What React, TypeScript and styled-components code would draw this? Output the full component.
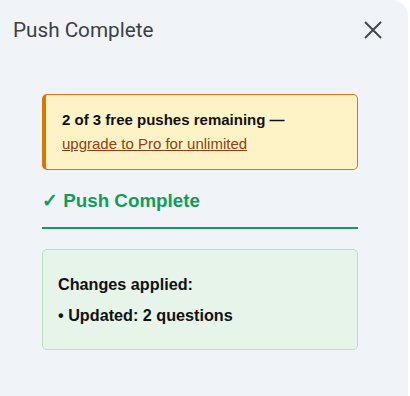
import styled, { createGlobalStyle } from "styled-components"

const GlobalStyle = createGlobalStyle`
  html, body {
    margin: 0;
    padding: 0;
    background: #ffffff;
  }
  * {
    box-sizing: border-box;
  }
`

export const Panel = styled.div`
  width: 408px;
  height: 396px;
  background: #f0f4f9;
  border-top-right-radius: 16px;
  font-family: "Liberation Sans", Arial, sans-serif;
  color: #111111;
`

export const Header = styled.div`
  height: 60px;
  display: flex;
  align-items: center;
  justify-content: space-between;
  padding: 0 23px 0 13px;
`

export const Title = styled.h1`
  margin: 0;
  font-family: Roboto, "Noto Sans", sans-serif;
  font-size: 20.7px;
  font-weight: 400;
  color: #3c4043;
`

export const CloseButton = styled.button`
  width: 24px;
  height: 24px;
  padding: 0;
  border: none;
  background: transparent;
  display: flex;
  align-items: center;
  justify-content: center;
  cursor: pointer;
`

export const Content = styled.div`
  padding: 34px 50px 0 42px;
`

export const Notice = styled.div`
  background: #fef3c7;
  border: 1px solid #d97706;
  border-left: 4px solid #d97706;
  border-radius: 5px;
  padding: 13px 16px;
  font-size: 15px;
  line-height: 24px;
`

export const NoticeText = styled.strong`
  font-weight: 700;
  color: #111111;
`

export const UpgradeLink = styled.a`
  color: #92400e;
  text-decoration: underline;
  cursor: pointer;
`

export const StatusHeading = styled.h2`
  margin: 19px 0 0;
  padding-bottom: 14px;
  border-bottom: 2px solid #0f9d58;
  font-size: 18.8px;
  line-height: 24px;
  font-weight: 700;
  color: #0f9d58;
`

export const ChangesBox = styled.div`
  margin-top: 20px;
  background: #e6f4ea;
  border: 1px solid #b7e1c1;
  border-radius: 5px;
  padding: 24px 15px;
  font-size: 16.2px;
  line-height: 20px;
  font-weight: 700;
`

export const ChangesTitle = styled.div`
  margin-bottom: 11px;
`

export const ChangeItem = styled.div``

export default function App(): JSX.Element {
  return (
    <>
      <GlobalStyle />
      <Panel>
        <Header>
          <Title>Push Complete</Title>
          <CloseButton aria-label="Close">
            <svg width="24" height="24" viewBox="0 0 24 24">
              <path
                d="M4 4 L20 20 M20 4 L4 20"
                stroke="#444746"
                strokeWidth="2"
                fill="none"
              />
            </svg>
          </CloseButton>
        </Header>
        <Content>
          <Notice>
            <NoticeText>2 of 3 free pushes remaining —</NoticeText>
            <br />
            <UpgradeLink>upgrade to Pro for unlimited</UpgradeLink>
          </Notice>
          <StatusHeading>✓ Push Complete</StatusHeading>
          <ChangesBox>
            <ChangesTitle>Changes applied:</ChangesTitle>
            <ChangeItem>• Updated: 2 questions</ChangeItem>
          </ChangesBox>
        </Content>
      </Panel>
    </>
  )
}
